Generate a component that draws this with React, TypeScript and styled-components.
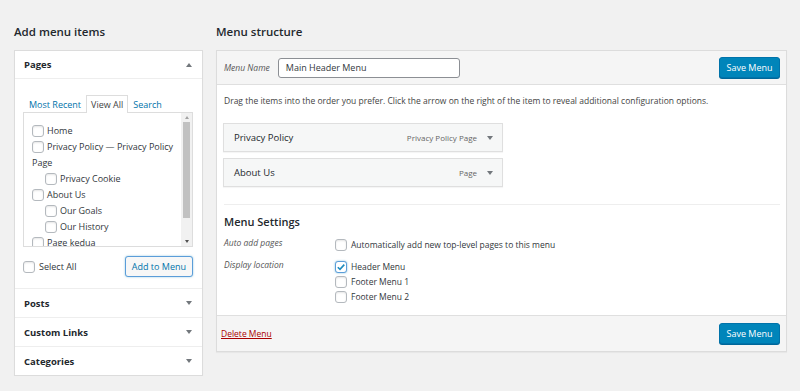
import React from "react";
import styled, { createGlobalStyle } from "styled-components";

const GlobalStyle = createGlobalStyle`
	body {
		margin: 0;
		background: #f1f1f1;
		font-family: "Open Sans", "Noto Sans", Arial, sans-serif;
		color: #23282d;
	}
`;

const Page = styled.div`
	display: flex;
	gap: 13px;
	padding: 24px 13px 0 14px;
	align-items: flex-start;
`;

const Column = styled.div<{ $width?: number }>`
	display: flex;
	flex-direction: column;
	width: ${(p) => (p.$width ? `${p.$width}px` : "auto")};
	flex: ${(p) => (p.$width ? "none" : "1")};
`;

const Heading = styled.h2`
	margin: 0 0 10px;
	height: 16px;
	line-height: 16px;
	font-size: 11.5px;
	font-weight: 600;
	color: #23282d;
`;

const Panel = styled.div`
	background: #fff;
	border: 1px solid #dcdcdc;
	box-shadow: 0 1px 1px rgba(0, 0, 0, 0.04);
`;

const SectionRow = styled.div<{ $last?: boolean; $height: number }>`
	display: flex;
	align-items: center;
	justify-content: space-between;
	height: ${(p) => p.$height}px;
	padding: 0 10px 0 9px;
	border-bottom: ${(p) => (p.$last ? "none" : "1px solid #eee")};
	font-size: 9.5px;
	font-weight: 700;
	color: #23282d;
`;

const Caret = styled.span<{ $up?: boolean }>`
	width: 0;
	height: 0;
	border-left: 3px solid transparent;
	border-right: 3px solid transparent;
	${(p) =>
		p.$up ? "border-bottom: 4px solid #72777c;" : "border-top: 4px solid #72777c;"}
`;

const PagesBody = styled.div`
	padding: 16px 9px 0 8px;
	border-bottom: 1px solid #eee;
`;

const Tabs = styled.div`
	display: flex;
	height: 17px;
	padding-left: 1px;
`;

const Tab = styled.span<{ $active?: boolean }>`
	position: relative;
	z-index: 1;
	display: flex;
	align-items: center;
	padding: 0 4px;
	font-size: 9px;
	color: ${(p) => (p.$active ? "#444" : "#0073aa")};
	background: ${(p) => (p.$active ? "#fff" : "transparent")};
	border: 1px solid ${(p) => (p.$active ? "#ddd" : "transparent")};
	border-bottom: none;
	margin-bottom: -1px;
	height: 18px;
	box-sizing: border-box;
`;

const ListBox = styled.div`
	display: flex;
	height: 135px;
	box-sizing: border-box;
	border: 1px solid #ddd;
	overflow: hidden;
`;

const List = styled.ul`
	flex: 1;
	margin: 0;
	padding: 10px 2px 0 8px;
	list-style: none;
`;

const ListItem = styled.li<{ $indent?: boolean }>`
	font-size: 9px;
	line-height: 16px;
	color: #32373c;
	padding-left: ${(p) => (p.$indent ? "13px" : "0")};
`;

const Box = styled.span<{ $checked?: boolean }>`
	display: inline-flex;
	align-items: center;
	justify-content: center;
	vertical-align: -3px;
	width: 12px;
	height: 12px;
	box-sizing: border-box;
	border: 1px solid ${(p) => (p.$checked ? "#5b9dd9" : "#b4b9be")};
	border-radius: 3px;
	background: #fff;
	margin-right: 3px;
	box-shadow: ${(p) =>
		p.$checked ? "0 0 2px rgba(30,140,190,.6)" : "inset 0 1px 2px rgba(0,0,0,.1)"};
`;

const Checkbox: React.FC<{ checked?: boolean }> = ({ checked }) => (
	<Box $checked={checked}>
		{checked && (
			<svg width="10" height="10" viewBox="0 0 10 10">
				<path d="M1.8 5.2 L4 7.4 L8.3 2.6" fill="none" stroke="#1e8cbe" strokeWidth="1.6" />
			</svg>
		)}
	</Box>
);

const Scrollbar = styled.div`
	display: flex;
	flex-direction: column;
	width: 11px;
	background: #f1f1f1;
`;

const ScrollArrow = styled.div`
	display: flex;
	align-items: center;
	justify-content: center;
	height: 9px;
`;

const ScrollTrack = styled.div`
	flex: 1;
	padding: 0 2px;
`;

const Thumb = styled.div`
	height: 96px;
	background: #c1c1c1;
`;

const SmallCaret = styled.span<{ $up?: boolean }>`
	width: 0;
	height: 0;
	border-left: 2px solid transparent;
	border-right: 2px solid transparent;
	${(p) =>
		p.$up ? "border-bottom: 3px solid #a3a3a3;" : "border-top: 3px solid #505050;"}
`;

const SelectRow = styled.div`
	display: flex;
	align-items: center;
	justify-content: space-between;
	height: 21px;
	margin: 9px 0 11px;
`;

const SelectLabel = styled.label`
	display: flex;
	align-items: center;
	font-size: 9px;
	color: #32373c;
	gap: 1px;
`;

const SecondaryButton = styled.button`
	height: 21px;
	padding: 0 6px;
	font-family: inherit;
	font-size: 9px;
	color: #0073aa;
	background: #f7f7f7;
	border: 1px solid #5b9dd9;
	border-radius: 3px;
	box-shadow: 0 0 2px rgba(30, 140, 190, 0.5);
`;

const PrimaryButton = styled.button`
	height: 21px;
	width: 61px;
	padding: 0;
	font-family: inherit;
	font-size: 9px;
	color: #fff;
	background: #0085ba;
	border: 1px solid #0073aa;
	border-radius: 3px;
	box-shadow: 0 1px 0 #006799;
`;

const MenuHeader = styled.div`
	display: flex;
	align-items: center;
	height: 33px;
	padding: 0 6px 0 7px;
	background: #f5f5f5;
	border-bottom: 1px solid #dfdfdf;
`;

const FieldLabel = styled.span<{ $width?: number }>`
	font-size: 8.5px;
	font-style: italic;
	color: #555;
	width: ${(p) => (p.$width ? `${p.$width}px` : "auto")};
	flex: none;
`;

const NameInput = styled.div`
	display: flex;
	align-items: center;
	width: 182px;
	height: 20px;
	box-sizing: border-box;
	padding: 0 7px;
	margin-left: 8px;
	background: #fff;
	border: 1px solid #8c8f94;
	border-radius: 3px;
	font-size: 9px;
	color: #32373c;
`;

const HeaderSpacer = styled.div`
	flex: 1;
`;

const MenuBody = styled.div`
	background: #fff;
	padding: 9px 6px 11px 6px;
`;

const Hint = styled.p`
	margin: 0 0 15px 1px;
	font-size: 8.5px;
	line-height: 14px;
	color: #444;
`;

const ItemList = styled.div`
	display: flex;
	flex-direction: column;
	gap: 6px;
`;

const MenuItem = styled.div`
	display: flex;
	align-items: center;
	width: 280px;
	height: 29px;
	box-sizing: border-box;
	padding: 0 9px 0 10px;
	background: #f6f7f7;
	border: 1px solid #dfdfdf;
	box-shadow: 0 1px 1px rgba(0, 0, 0, 0.04);
`;

const ItemTitle = styled.span`
	flex: 1;
	font-size: 9.5px;
	color: #23282d;
`;

const ItemType = styled.span`
	font-size: 8px;
	color: #666;
	margin-right: 10px;
`;

const Divider = styled.div`
	margin: 17px 0 0 1px;
	border-top: 1px solid #eee;
`;

const SettingsTitle = styled.h3`
	margin: 9px 0 7px 1px;
	height: 16px;
	line-height: 16px;
	font-size: 11px;
	font-weight: 600;
	color: #23282d;
`;

const SettingRow = styled.div<{ $gap?: number }>`
	display: flex;
	align-items: flex-start;
	margin: ${(p) => (p.$gap ? `${p.$gap}px` : "0")} 0 0 1px;
`;

const Options = styled.div`
	display: flex;
	flex-direction: column;
`;

const Option = styled.label`
	display: flex;
	align-items: center;
	height: 15px;
	font-size: 8.5px;
	color: #32373c;
	gap: 1px;
`;

const MenuFooter = styled.div`
	display: flex;
	align-items: center;
	justify-content: space-between;
	height: 35px;
	padding: 0 6px 0 4px;
	background: #f5f5f5;
	border-top: 1px solid #dfdfdf;
`;

const DeleteLink = styled.a`
	font-size: 8.5px;
	color: #a00;
	text-decoration: underline;
`;

const pages = [
	{ label: "Home" },
	{ label: "Privacy Policy — Privacy Policy Page" },
	{ label: "Privacy Cookie", indent: true },
	{ label: "About Us" },
	{ label: "Our Goals", indent: true },
	{ label: "Our History", indent: true },
	{ label: "Page kedua" },
];

const App: React.FC = () => {
	return (
		<>
			<GlobalStyle />
			<Page>
				<Column $width={189}>
					<Heading>Add menu items</Heading>
					<Panel>
						<SectionRow $height={27}>
							Pages
							<Caret $up />
						</SectionRow>
						<PagesBody>
							<Tabs>
								<Tab>Most Recent</Tab>
								<Tab $active>View All</Tab>
								<Tab>Search</Tab>
							</Tabs>
							<ListBox>
								<List>
									{pages.map((page) => (
										<ListItem key={page.label} $indent={page.indent}>
											<Checkbox />
											{page.label}
										</ListItem>
									))}
								</List>
								<Scrollbar>
									<ScrollArrow>
										<SmallCaret $up />
									</ScrollArrow>
									<ScrollTrack>
										<Thumb />
									</ScrollTrack>
									<ScrollArrow>
										<SmallCaret />
									</ScrollArrow>
								</Scrollbar>
							</ListBox>
							<SelectRow>
								<SelectLabel>
									<Checkbox />
									Select All
								</SelectLabel>
								<SecondaryButton>Add to Menu</SecondaryButton>
							</SelectRow>
						</PagesBody>
						<SectionRow $height={28}>
							Posts
							<Caret />
						</SectionRow>
						<SectionRow $height={28}>
							Custom Links
							<Caret />
						</SectionRow>
						<SectionRow $height={28} $last>
							Categories
							<Caret />
						</SectionRow>
					</Panel>
				</Column>

				<Column>
					<Heading>Menu structure</Heading>
					<Panel>
						<MenuHeader>
							<FieldLabel>Menu Name</FieldLabel>
							<NameInput>Main Header Menu</NameInput>
							<HeaderSpacer />
							<PrimaryButton>Save Menu</PrimaryButton>
						</MenuHeader>
						<MenuBody>
							<Hint>
								Drag the items into the order you prefer. Click the arrow on the
								right of the item to reveal additional configuration options.
							</Hint>
							<ItemList>
								<MenuItem>
									<ItemTitle>Privacy Policy</ItemTitle>
									<ItemType>Privacy Policy Page</ItemType>
									<Caret />
								</MenuItem>
								<MenuItem>
									<ItemTitle>About Us</ItemTitle>
									<ItemType>Page</ItemType>
									<Caret />
								</MenuItem>
							</ItemList>
							<Divider />
							<SettingsTitle>Menu Settings</SettingsTitle>
							<SettingRow>
								<FieldLabel $width={111}>Auto add pages</FieldLabel>
								<Options>
									<Option>
										<Checkbox />
										Automatically add new top-level pages to this menu
									</Option>
								</Options>
							</SettingRow>
							<SettingRow $gap={7}>
								<FieldLabel $width={111}>Display location</FieldLabel>
								<Options>
									<Option>
										<Checkbox checked />
										Header Menu
									</Option>
									<Option>
										<Checkbox />
										Footer Menu 1
									</Option>
									<Option>
										<Checkbox />
										Footer Menu 2
									</Option>
								</Options>
							</SettingRow>
						</MenuBody>
						<MenuFooter>
							<DeleteLink href="#">Delete Menu</DeleteLink>
							<PrimaryButton>Save Menu</PrimaryButton>
						</MenuFooter>
					</Panel>
				</Column>
			</Page>
		</>
	);
};

export default App;
